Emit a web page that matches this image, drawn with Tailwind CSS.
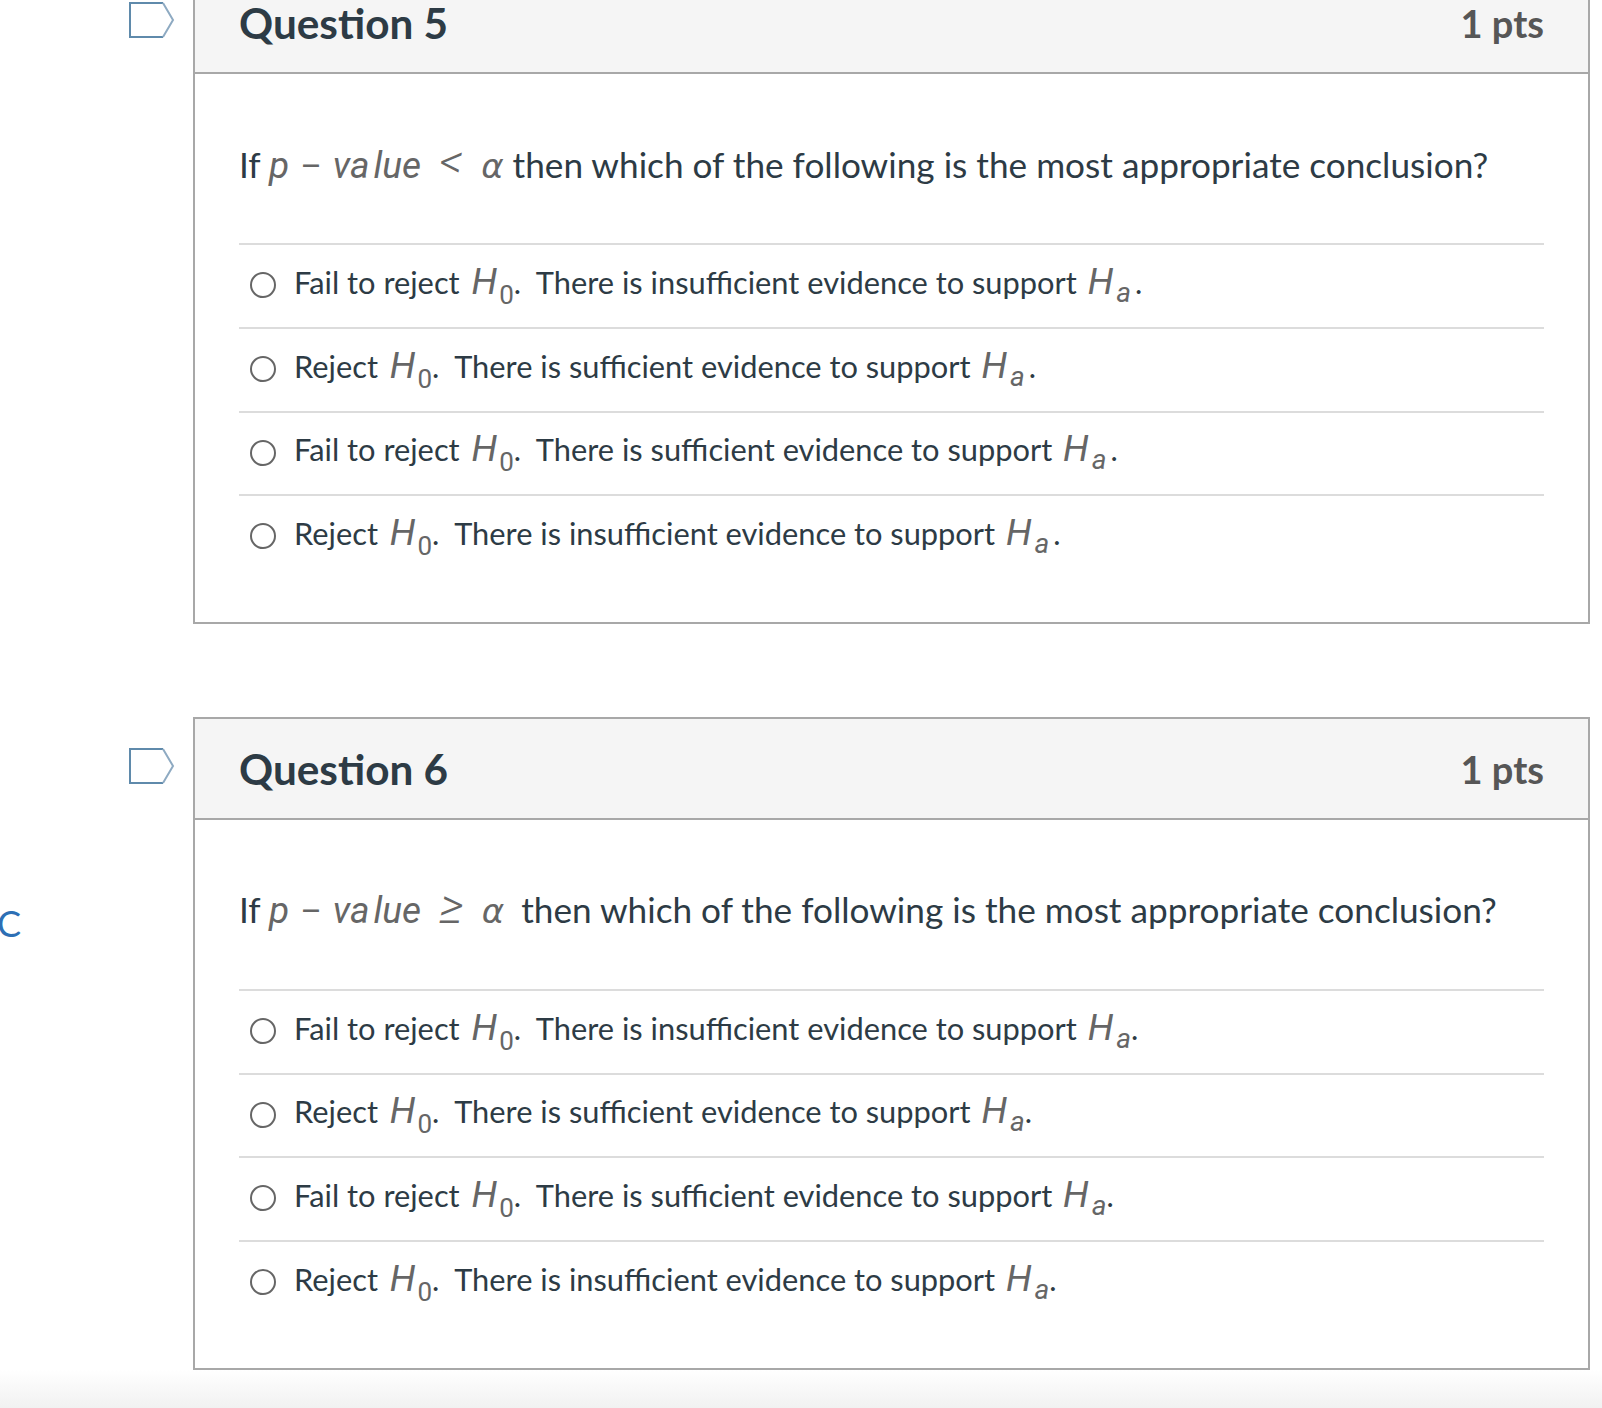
<!DOCTYPE html>
<html lang="en">
<head>
    <meta charset="UTF-8">
    <meta name="viewport" content="width=device-width, initial-scale=1.0">
    <title>Quiz</title>
    <script src="https://cdn.jsdelivr.net/npm/@tailwindcss/browser@4"></script>
</head>
<body class="bg-white">
<div class="relative h-[1408px] overflow-hidden font-['Lato','Liberation_Sans',sans-serif] text-[#2d3b45]">
    <!-- cut-off letter at the page edge -->
    <span class="absolute left-[-3px] top-[901px] text-[36px] leading-[44px] text-[#2d6fb5]">C</span>

    <div class="ml-[193px] mr-[12px] mt-[-29px] flex flex-col gap-[93px]">

        <!-- Question 5 -->
        <section class="relative h-[653px] border-2 border-[#a8a8a8]">
            <svg class="absolute left-[-66px] top-[29px]" width="46" height="36" viewBox="0 0 46 36" fill="none"><path d="M34 1H1V35H34" stroke="#5f8aab" stroke-width="2"/><path d="M34 1L44 18L34 35" stroke="#8eaac2" stroke-width="2"/></svg>
            <header class="flex h-[101px] items-center justify-between border-b-2 border-[#a8a8a8] bg-[#f5f5f5] px-[44px] pt-[1px]">
                <h2 class="text-[42.3px] font-bold">Question 5</h2>
                <span class="mt-[1px] text-[38px] font-bold text-[#565656]">1 pts</span>
            </header>
            <div class="px-[44px]">
                <p class="h-[169px] whitespace-pre pt-[64px] text-[35.2px] leading-[50px]">If <i class="font-['Roboto'] text-[37px] text-[#666]">p <span class="ml-[2px] mr-[2px] font-['Lato'] not-italic">−</span> <span class="mr-[4px]">va</span>lue  <span class="text-[48px] font-light leading-none">&lt;</span>  <span class="font-['DejaVu_Sans'] text-[34px]">α</span></i> then which of the following is the most appropriate conclusion?</p>
                <ul class="text-[30.8px] leading-[44px]">
                    <li class="flex h-[84px] items-center border-t-2 border-[#dcdcdc] pb-[8px] pl-[11px]">
                        <span class="mr-[18px] mt-[6px] h-[26px] w-[26px] rounded-full border-2 border-[#666]"></span>
                        <span class="whitespace-pre">Fail to reject <i class="ml-[4px] font-['Roboto'] text-[37px] text-[#666]">H<sub class="bottom-[-10px] ml-[2px] text-[26px] not-italic">0</sub></i>.  There is insufficient evidence to support <i class="ml-[3px] font-['Roboto'] text-[37px] text-[#666]">H<sub class="bottom-[-8px] ml-[3px] text-[28px]">a</sub></i><span class="ml-[4px]">.</span></span>
                    </li>
                    <li class="flex h-[84px] items-center border-t-2 border-[#dcdcdc] pb-[8px] pl-[11px]">
                        <span class="mr-[18px] mt-[6px] h-[26px] w-[26px] rounded-full border-2 border-[#666]"></span>
                        <span class="whitespace-pre">Reject <i class="ml-[4px] font-['Roboto'] text-[37px] text-[#666]">H<sub class="bottom-[-10px] ml-[2px] text-[26px] not-italic">0</sub></i>.  There is sufficient evidence to support <i class="ml-[3px] font-['Roboto'] text-[37px] text-[#666]">H<sub class="bottom-[-8px] ml-[3px] text-[28px]">a</sub></i><span class="ml-[4px]">.</span></span>
                    </li>
                    <li class="flex h-[83px] items-center border-t-2 border-[#dcdcdc] pb-[8px] pl-[11px]">
                        <span class="mr-[18px] mt-[6px] h-[26px] w-[26px] rounded-full border-2 border-[#666]"></span>
                        <span class="whitespace-pre">Fail to reject <i class="ml-[4px] font-['Roboto'] text-[37px] text-[#666]">H<sub class="bottom-[-10px] ml-[2px] text-[26px] not-italic">0</sub></i>.  There is sufficient evidence to support <i class="ml-[3px] font-['Roboto'] text-[37px] text-[#666]">H<sub class="bottom-[-8px] ml-[3px] text-[28px]">a</sub></i><span class="ml-[4px]">.</span></span>
                    </li>
                    <li class="flex h-[84px] items-center border-t-2 border-[#dcdcdc] pb-[8px] pl-[11px]">
                        <span class="mr-[18px] mt-[6px] h-[26px] w-[26px] rounded-full border-2 border-[#666]"></span>
                        <span class="whitespace-pre">Reject <i class="ml-[4px] font-['Roboto'] text-[37px] text-[#666]">H<sub class="bottom-[-10px] ml-[2px] text-[26px] not-italic">0</sub></i>.  There is insufficient evidence to support <i class="ml-[3px] font-['Roboto'] text-[37px] text-[#666]">H<sub class="bottom-[-8px] ml-[3px] text-[28px]">a</sub></i><span class="ml-[4px]">.</span></span>
                    </li>
                </ul>
            </div>
        </section>

        <!-- Question 6 -->
        <section class="relative h-[653px] border-2 border-[#a8a8a8]">
            <svg class="absolute left-[-66px] top-[29px]" width="46" height="36" viewBox="0 0 46 36" fill="none"><path d="M34 1H1V35H34" stroke="#5f8aab" stroke-width="2"/><path d="M34 1L44 18L34 35" stroke="#8eaac2" stroke-width="2"/></svg>
            <header class="flex h-[101px] items-center justify-between border-b-2 border-[#a8a8a8] bg-[#f5f5f5] px-[44px] pt-[1px]">
                <h2 class="text-[42.3px] font-bold">Question 6</h2>
                <span class="mt-[1px] text-[38px] font-bold text-[#565656]">1 pts</span>
            </header>
            <div class="px-[44px]">
                <p class="h-[169px] whitespace-pre pt-[63px] text-[35.2px] leading-[50px]">If <i class="mr-[8px] font-['Roboto'] text-[37px] text-[#666]">p <span class="ml-[2px] mr-[2px] font-['Lato'] not-italic">−</span> <span class="mr-[4px]">va</span>lue  <span class="text-[48px] font-light leading-none">≥</span>  <span class="font-['DejaVu_Sans'] text-[34px]">α</span></i> then which of the following is the most appropriate conclusion?</p>
                <ul class="text-[30.8px] leading-[44px]">
                    <li class="flex h-[84px] items-center border-t-2 border-[#dcdcdc] pb-[8px] pl-[11px]">
                        <span class="mr-[18px] mt-[6px] h-[26px] w-[26px] rounded-full border-2 border-[#666]"></span>
                        <span class="whitespace-pre">Fail to reject <i class="ml-[4px] font-['Roboto'] text-[37px] text-[#666]">H<sub class="bottom-[-10px] ml-[2px] text-[26px] not-italic">0</sub></i>.  There is insufficient evidence to support <i class="ml-[3px] font-['Roboto'] text-[37px] text-[#666]">H<sub class="bottom-[-8px] ml-[3px] text-[28px]">a</sub></i>.</span>
                    </li>
                    <li class="flex h-[83px] items-center border-t-2 border-[#dcdcdc] pb-[8px] pl-[11px]">
                        <span class="mr-[18px] mt-[6px] h-[26px] w-[26px] rounded-full border-2 border-[#666]"></span>
                        <span class="whitespace-pre">Reject <i class="ml-[4px] font-['Roboto'] text-[37px] text-[#666]">H<sub class="bottom-[-10px] ml-[2px] text-[26px] not-italic">0</sub></i>.  There is sufficient evidence to support <i class="ml-[3px] font-['Roboto'] text-[37px] text-[#666]">H<sub class="bottom-[-8px] ml-[3px] text-[28px]">a</sub></i>.</span>
                    </li>
                    <li class="flex h-[84px] items-center border-t-2 border-[#dcdcdc] pb-[8px] pl-[11px]">
                        <span class="mr-[18px] mt-[6px] h-[26px] w-[26px] rounded-full border-2 border-[#666]"></span>
                        <span class="whitespace-pre">Fail to reject <i class="ml-[4px] font-['Roboto'] text-[37px] text-[#666]">H<sub class="bottom-[-10px] ml-[2px] text-[26px] not-italic">0</sub></i>.  There is sufficient evidence to support <i class="ml-[3px] font-['Roboto'] text-[37px] text-[#666]">H<sub class="bottom-[-8px] ml-[3px] text-[28px]">a</sub></i>.</span>
                    </li>
                    <li class="flex h-[84px] items-center border-t-2 border-[#dcdcdc] pb-[8px] pl-[11px]">
                        <span class="mr-[18px] mt-[6px] h-[26px] w-[26px] rounded-full border-2 border-[#666]"></span>
                        <span class="whitespace-pre">Reject <i class="ml-[4px] font-['Roboto'] text-[37px] text-[#666]">H<sub class="bottom-[-10px] ml-[2px] text-[26px] not-italic">0</sub></i>.  There is insufficient evidence to support <i class="ml-[3px] font-['Roboto'] text-[37px] text-[#666]">H<sub class="bottom-[-8px] ml-[3px] text-[28px]">a</sub></i>.</span>
                    </li>
                </ul>
            </div>
        </section>
    </div>

    <!-- soft fade along the bottom edge -->
    <div class="absolute bottom-0 left-0 h-[38px] w-full bg-linear-to-b from-white to-[#f1f1f1]"></div>
</div>
</body>
</html>
